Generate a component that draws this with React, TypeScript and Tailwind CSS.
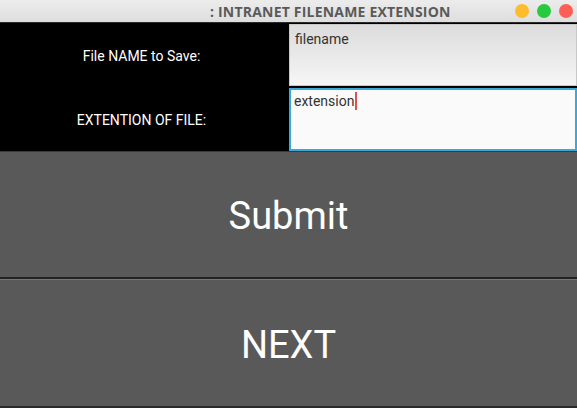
import React from "react";

export default function App() {
  return (
    <div className="w-[577px] h-[408px] flex flex-col overflow-hidden bg-black" style={{ fontFamily: "Roboto, 'Liberation Sans', sans-serif" }}>
      <div className="h-[22px] flex items-center bg-gradient-to-b from-[#ececec] to-[#dedede] relative">
        <div className="flex-1 pl-[210px] text-[14px] font-bold text-[#5a5a5a] tracking-[0.2px]" style={{ fontFamily: "'Open Sans', 'DejaVu Sans', sans-serif" }}>
          : INTRANET FILENAME EXTENSION
        </div>
        <div className="flex items-center gap-[8px] pr-[4px]">
          <div className="w-[14px] h-[14px] rounded-full bg-[#fdbc2c]" />
          <div className="w-[14px] h-[14px] rounded-full bg-[#27c93f]" />
          <div className="w-[14px] h-[14px] rounded-full bg-[#fd5f57]" />
        </div>
      </div>
      <div className="h-[1px] bg-[#2a2a2a]" />
      <div className="h-[128px] flex bg-black">
        <div className="w-[289px] flex flex-col text-white text-[14px]">
          <div className="flex-1 flex items-center justify-center pt-[2px] pr-[6px]">File NAME to Save:</div>
          <div className="flex-1 flex items-center justify-center pt-[2px] pr-[6px]">EXTENTION OF FILE:</div>
        </div>
        <div className="flex-1 flex flex-col pt-[1px] gap-[2px]">
          <div className="h-[62px] bg-gradient-to-b from-[#dcdcdc] to-[#f6f6f6] border border-[#c8c8c8] px-[5px] pt-[5px] text-[14px] text-[#333] leading-[18px]">
            filename
          </div>
          <div className="h-[63px] bg-[#fafafa] border-2 border-[#3aa9d9] px-[3px] pt-[2px] text-[14px] text-[#333] leading-[18px] flex items-start">
            <span>extension</span>
            <span className="inline-block w-[1.5px] h-[18px] bg-[#e05050] ml-[1px]" />
          </div>
        </div>
      </div>
      <button className="h-[128px] w-full bg-[#595959] border-t border-[#3a3a3a] border-b-2 border-b-[#222] text-white text-[38px] flex items-center justify-center pt-[4px]">
        Submit
      </button>
      <button className="h-[129px] w-full bg-[#595959] border-t border-[#777] border-b-2 border-b-[#2a2a2a] text-white text-[38px] flex items-center justify-center pt-[4px]">
        NEXT
      </button>
    </div>
  );
}
